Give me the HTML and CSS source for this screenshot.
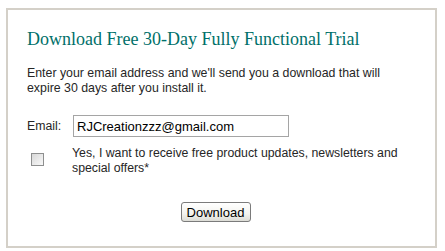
FILE: index.html
```html
<!DOCTYPE html>
<html>
<head>
<meta charset="utf-8">
<link rel="stylesheet" href="styles.css">
</head>
<body>
<div class="panel">
  <h1 class="title">Download Free 30-Day Fully Functional Trial</h1>
  <p class="intro">Enter your email address and we'll send you a download that will expire 30 days after you install it.</p>
  <div class="email-row">
    <label class="email-label" for="email">Email:</label>
    <input class="email-input" id="email" type="text" value="RJCreationzzz@gmail.com">
  </div>
  <div class="optin-row">
    <input class="optin-box" id="optin" type="checkbox">
    <label class="optin-label" for="optin">Yes, I want to receive free product updates, newsletters and special offers*</label>
  </div>
  <div class="actions">
    <button class="download-btn" type="button">Download</button>
  </div>
</div>
</body>
</html>
```

FILE: styles.css
```css
html, body {
  margin: 0;
  padding: 0;
  background: #ffffff;
}

body {
  font-family: "Liberation Sans", Arial, sans-serif;
  color: #262626;
}

.panel {
  box-sizing: border-box;
  margin: 8px 0 0 6px;
  width: 431px;
  height: 240px;
  border: 2px solid #d4d0c8;
  padding: 18px 19px 0 19px;
}

.title {
  margin: 0;
  font-family: "Liberation Serif", "Times New Roman", serif;
  font-weight: normal;
  font-size: 18px;
  line-height: 22px;
  color: #007069;
}

.intro {
  margin: 16px 0 0 0;
  font-size: 12.35px;
  line-height: 15px;
  width: 375px;
}

.email-row {
  display: flex;
  align-items: center;
  margin-top: 19px;
}

.email-label {
  width: 46px;
  font-size: 12.3px;
  line-height: 15px;
}

.email-input {
  box-sizing: border-box;
  width: 216px;
  height: 22px;
  margin: 0;
  padding: 0 3px;
  border: 1px solid #a5a5a5;
  font-family: "Liberation Sans", Arial, sans-serif;
  font-size: 13px;
  color: #000;
  background: #fff;
  outline: none;
}

.optin-row {
  display: flex;
  align-items: flex-start;
  margin-top: 9px;
}

.optin-box {
  appearance: none;
  -webkit-appearance: none;
  box-sizing: border-box;
  width: 13px;
  height: 13px;
  margin: 7px 28px 0 4px;
  border: 1px solid #8e8f8f;
  background: linear-gradient(135deg, #d8d8d8 0%, #ececec 60%, #f8f8f8 100%);
  flex: none;
}

.optin-label {
  font-size: 12.3px;
  line-height: 15px;
  width: 340px;
}

.actions {
  display: flex;
  justify-content: center;
  padding-right: 12px;
  margin-top: 26px;
}

.download-btn {
  box-sizing: border-box;
  width: 70px;
  height: 20px;
  margin: 0;
  padding: 0;
  border: 1px solid #7b7b7b;
  border-radius: 3px;
  background: linear-gradient(#ffffff 0%, #f3f3ef 60%, #dcdcd6 100%);
  font-family: "Liberation Sans", Arial, sans-serif;
  font-size: 13px;
  color: #000;
}
```
